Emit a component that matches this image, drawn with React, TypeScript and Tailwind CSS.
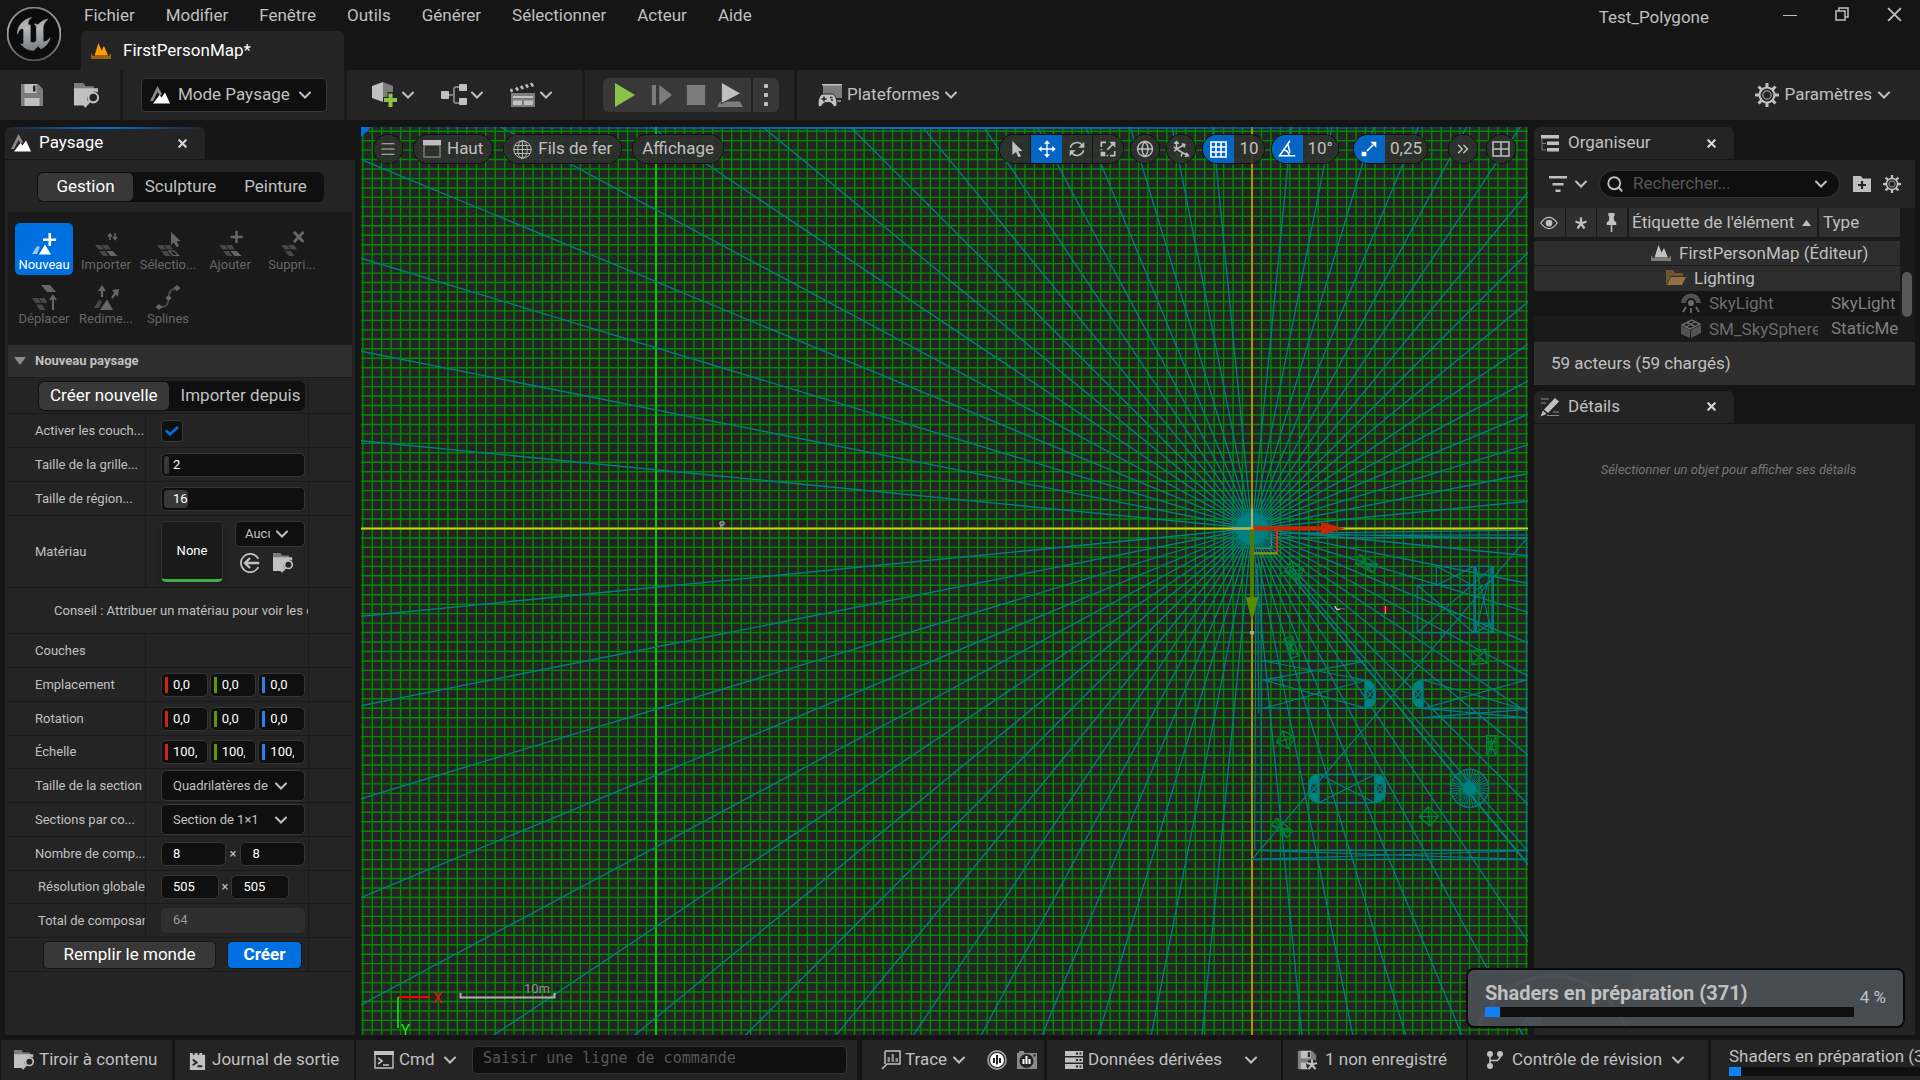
import type { ReactNode } from 'react';
import { ChevronsRight, Globe, Menu, Search, X } from 'lucide-react';
import { SiUnrealengine } from 'react-icons/si';

const menus = ['Fichier', 'Modifier', 'Fenêtre', 'Outils', 'Générer', 'Sélectionner', 'Acteur', 'Aide'];

/* ---------- icons ---------- */

function Icon({ size = 24, box = 24, className = '', children }: { size?: number; box?: number; className?: string; children: ReactNode }) {
  return (
    <svg width={size} height={size} viewBox={`0 0 ${box} ${box}`} fill="currentColor" className={`shrink-0 ${className}`} aria-hidden="true">
      {children}
    </svg>
  );
}

function Chevron({ className = '' }: { className?: string }) {
  return (
    <svg width="12" height="12" viewBox="0 0 12 12" fill="none" stroke="currentColor" strokeWidth="2" strokeLinecap="round" className={`pointer-events-none shrink-0 ${className}`} aria-hidden="true">
      <path d="M1 3.5l5 5 5-5" />
    </svg>
  );
}

function SaveIcon({ size = 24, star = false }: { size?: number; star?: boolean }) {
  return (
    <Icon size={size}>
      <path d="M1 1h17l5 5v17H1z" fill="#7c7c7c" />
      <path d="M4.500 1h12v9h-12z" fill="#c0c0c0" />
      <path d="M13 2.500h2.500v6H13z" fill="#242424" />
      <path d="M4.500 15h15v8h-15z" fill="#c0c0c0" />
      {star && <circle cx="18" cy="18" r="7" fill="#242424" />}
      {star && <path d="M18 17.500v-6.500M18 17.500l6-2M18 17.500l4 5.500M18 17.500l-4 5.500M18 17.500l-6-2" stroke="#c0c0c0" strokeWidth="2.600" />}
    </Icon>
  );
}

function FolderSearch({ size = 24 }: { size?: number }) {
  return (
    <Icon size={size}>
      <path d="M0 0h9l2 3h8v3H0z" fill="#7c7c7c" />
      <path d="M0 5h23v4a7 7 0 0 0-9.500 9l-3 3.500H0z" />
      <circle cx="18.500" cy="14" r="4.600" fill="none" stroke="currentColor" strokeWidth="2" />
      <path d="M15 17.500l-5 5.500" stroke="currentColor" strokeWidth="2.400" />
    </Icon>
  );
}

function LandscapeIcon({ size = 20 }: { size?: number }) {
  return (
    <Icon size={size} box={20}>
      <path d="M0 16L7.500 1l4.500 8-2 2-2.500-4L3 16z" fill="#8a8a8a" />
      <path d="M3 18.500L9.500 10l2 2.500L15 7.500l5 11z" fill="#fff" />
    </Icon>
  );
}

function LevelIcon({ tone, base }: { tone: string; base: string }) {
  return (
    <Icon size={20} box={20}>
      <path d="M0 15h20v3H0zM0 15V12l2 3zM20 15v-3l-2 3z" fill={base} />
      <path d="M3.500 14.500L7.500 2l3 7.500L13 5l4 9.500z" fill={tone} />
    </Icon>
  );
}

function GearIcon({ size = 24 }: { size?: number }) {
  return (
    <Icon size={size}>
      <g stroke="currentColor">
        <path d="M12 0v5M12 19v5M0 12h5M19 12h5M3.500 3.500l3.500 3.500M17 17l3.500 3.500M3.500 20.500L7 17M17 7l3.500-3.500" strokeWidth="3" />
        <circle cx="12" cy="12" r="7.500" fill="#242424" strokeWidth="2.200" />
        <circle cx="12" cy="12" r="4.200" fill="#242424" strokeWidth="1" />
      </g>
    </Icon>
  );
}

function TileBase() {
  return <path d="M1 13h6l3 4.500H4.500zM8 13h6l3 4.500h-6zM5 19h6l3.500 5H9z" opacity=".6" />;
}

const tools: { label: string; icon: ReactNode }[] = [
  {
    label: 'Nouveau',
    icon: (
      <>
        <path d="M0 22l5-8 3 1-3 7z" opacity=".6" />
        <path d="M7 22.500l6-10 6 10z" />
        <path d="M16.500 1h2.600v5.500h5v2.600h-5v5h-2.600v-5h-5.500V6.500h5.500z" />
      </>
    ),
  },
  {
    label: 'Importer',
    icon: (
      <>
        <TileBase />
        <path d="M12.500 19h6l5 5h-7z" />
        <path d="M16 8V3M14 4.500l2-2.500 2 2.500M21 1v6M19 5l2 2.500L23 5" fill="none" stroke="currentColor" strokeWidth="1.500" />
      </>
    ),
  },
  {
    label: 'Sélectio...',
    icon: (
      <>
        <TileBase />
        <path d="M13 19h5l4.500 4.500h-5.500z" fill="none" stroke="currentColor" strokeWidth="1.200" />
        <path d="M15 0l9.500 9-4 .5 2.500 4.500-2.500 1-2.500-4.500-3 2.500z" />
      </>
    ),
  },
  {
    label: 'Ajouter',
    icon: (
      <>
        <TileBase />
        <path d="M12.500 19h6l5 5h-7z" />
        <path d="M18.500-1v12M12.500 5h12" stroke="currentColor" strokeWidth="2.500" />
      </>
    ),
  },
  {
    label: 'Suppri...',
    icon: (
      <>
        <TileBase />
        <path d="M14 0l9.500 10M23.500 0L14 10" stroke="currentColor" strokeWidth="2.800" />
      </>
    ),
  },
  {
    label: 'Déplacer',
    icon: (
      <>
        <path d="M0 12h6l3 5H3.500zM7 12h6l2 5h-5zM4 18.500h6l3.500 5.500H8z" opacity=".6" />
        <path d="M9-1h9l6 7H15z" />
        <path d="M21 24V11M18 14l3-4 3 4" fill="none" stroke="currentColor" strokeWidth="2" />
      </>
    ),
  },
  {
    label: 'Redime...',
    icon: (
      <>
        <path d="M0 22l5-8 3 1-3 7z" opacity=".6" />
        <path d="M6 24l7-10.500L19 24z" />
        <path d="M8 11V2M18 12l5-7" stroke="currentColor" strokeWidth="2.200" />
        <path d="M4 5l4-6 4 6zM18 4l7-1-1 8z" />
      </>
    ),
  },
  {
    label: 'Splines',
    icon: (
      <>
        <path d="M3 21c8 0 9-2 9.500-9S15 3 22 2" fill="none" stroke="currentColor" strokeWidth="2" opacity=".6" />
        <path d="M3 18l3.500 3L3 24l-3.500-3zM12.500 9l3 3-3 3-3-3zM21-1l3.500 3L21 5l-3.500-3z" />
      </>
    ),
  },
];

/* ---------- small controls ---------- */

function PanelTab({ title, icon, active = false }: { title: string; icon: ReactNode; active?: boolean }) {
  return (
    <div className="relative flex h-8 w-[200px] items-center rounded-t-md bg-[#242424] pr-[15px] pl-1.5">
      {active && <span className="absolute inset-x-0 top-0 h-0.5 bg-linear-to-r from-transparent via-[#0070e0] to-transparent" />}
      {icon}
      <h2 className={active ? 'ml-2 grow text-[17px] text-white' : 'ml-2 grow text-[17px]'}>{title}</h2>
      <button aria-label={`Fermer ${title}`} className="p-px text-[#d8d8d8]">
        <X size={13} strokeWidth={4} />
      </button>
    </div>
  );
}

function Row({ label, inset = false, height = 'h-[34px]', children }: { label: string; inset?: boolean; height?: string; children?: ReactNode }) {
  return (
    <div className={`flex border-b border-[#1a1a1a] ${height}`}>
      <div className={`flex w-[138px] shrink-0 items-center overflow-hidden border-r border-[#1a1a1a] whitespace-nowrap ${inset ? 'pl-[30px]' : 'pl-[27px]'}`}>{label}</div>
      <div className="flex w-[163px] shrink-0 items-center border-r border-[#1a1a1a] pr-[3px] pl-[15px]">{children}</div>
    </div>
  );
}

function NumberBox({ label, value, fill, bar }: { label: string; value: string; fill?: string; bar?: string }) {
  return (
    <span className="relative flex h-6 min-w-0 flex-1 items-center overflow-hidden rounded-[5px] border border-[#363636] bg-[#0f0f0f]">
      {fill && <span className={`absolute inset-y-0.5 left-0.5 rounded-sm bg-[#383838] ${fill}`} />}
      {bar && <span className={`ml-[3px] h-4 w-[3px] shrink-0 ${bar}`} />}
      <input aria-label={label} defaultValue={value} className={`relative w-full min-w-0 bg-transparent text-white outline-none ${bar ? 'mr-2.5 pl-[5px]' : 'pl-[11px]'}`} />
    </span>
  );
}

function VectorRow({ label, value, height }: { label: string; value: string; height?: string }) {
  return (
    <Row label={label} height={height}>
      <div className="flex w-full gap-0.5">
        <NumberBox label={`${label} X`} value={value} bar="bg-[#c92706]" />
        <NumberBox label={`${label} Y`} value={value} bar="bg-[#5c9a00]" />
        <NumberBox label={`${label} Z`} value={value} bar="bg-[#2f7fee]" />
      </div>
    </Row>
  );
}

function SelectBox({ label, value, className }: { label: string; value: string; className: string }) {
  return (
    <span className={`flex items-center rounded-[5px] border border-[#363636] bg-[#0f0f0f] ${className}`}>
      <select aria-label={label} className="min-w-0 grow appearance-none overflow-hidden bg-transparent text-clip outline-none">
        <option>{value}</option>
      </select>
      <Chevron className="ml-1.5" />
    </span>
  );
}

/* ---------- header ---------- */

function Header() {
  return (
    <header className="flex h-[70px]">
      <svg width="0" height="0" className="absolute" aria-hidden="true">
        <linearGradient id="steel" x1="0" y1="0" x2="0" y2="1">
          <stop offset="0" stopColor="#8d8d8d" />
          <stop offset=".4" stopColor="#b5b8ba" />
          <stop offset="1" stopColor="#5d6163" />
        </linearGradient>
      </svg>
      <div className="w-[69px] shrink-0 pt-[7px] pl-[7px]">
        <div className="size-[54px] rounded-full bg-[#0c0c0c]">
          <SiUnrealengine size={54} fill="url(#steel)" stroke="url(#steel)" strokeWidth=".3" />
        </div>
      </div>
      <div className="ml-3 flex flex-col">
        <nav className="ml-[3px] flex h-[31px] items-center gap-[31px]">
          {menus.map((item) => (
            <button key={item}>{item}</button>
          ))}
        </nav>
        <div className="flex h-[39px] w-[263px] items-center rounded-t-md bg-[#242424] pl-2.5 text-white">
          <LevelIcon tone="#ff9c00" base="#9b6410" />
          <h1 className="ml-3">FirstPersonMap*</h1>
        </div>
      </div>
      <div className="ml-auto flex h-9 items-center">
        <span>Test_Polygone</span>
        <div className="mr-[18px] mb-2 ml-[74px] flex items-center gap-[38px]">
          <button aria-label="Réduire">
            <Icon size={14} box={14}>
              <path d="M0 8.500h14" stroke="currentColor" />
            </Icon>
          </button>
          <button aria-label="Restaurer">
            <Icon size={14} box={14}>
              <path d="M1 4h9v9H1zM4 4V1h9v9h-3" fill="none" stroke="currentColor" strokeWidth="1.500" />
            </Icon>
          </button>
          <button aria-label="Fermer">
            <Icon size={15} box={14}>
              <path d="M1 1l12 12M13 1L1 13" stroke="currentColor" strokeWidth="1.700" />
            </Icon>
          </button>
        </div>
      </div>
    </header>
  );
}

function Toolbar() {
  return (
    <div className="flex h-[50px] items-center bg-[#242424]">
      <div className="flex h-full w-[123px] items-center gap-[30px] border-r-3 border-[#1a1a1a] pl-5">
        <button aria-label="Enregistrer"><SaveIcon /></button>
        <button aria-label="Parcourir"><FolderSearch size={25} /></button>
      </div>
      <div className="flex h-full w-[224px] items-center border-r-3 border-[#1a1a1a] pl-[18px]">
        <span className="flex h-[34px] w-[186px] items-center rounded-[5px] border border-[#383838] bg-[#0f0f0f] pr-[15px] pl-2">
          <LandscapeIcon />
          <select aria-label="Mode" className="ml-2 min-w-0 grow appearance-none bg-transparent outline-none">
            <option>Mode Paysage</option>
          </select>
          <Chevron />
        </span>
      </div>
      <div className="flex h-full w-[238px] items-center gap-[27px] border-r-3 border-[#1a1a1a] pl-[25px]">
        <button aria-label="Ajouter au projet" className="flex items-center gap-1">
          <Icon size={26} box={26}>
            <path d="M0 4l11-4v20L0 16z" />
            <path d="M11 0l10 4v12l-10 4z" fill="#7c7c7c" />
            <path d="M15.500 10h6v5H26v6h-4.500v5h-6v-5H11v-6h4.500z" fill="#242424" />
            <path d="M16.500 11.500h4V16H25v4h-4.500v5h-4v-5H12v-4h4.500z" fill="#8bc34a" />
          </Icon>
          <Chevron />
        </button>
        <button aria-label="Blueprints" className="flex items-center gap-1">
          <Icon size={26} box={26}>
            <path d="M8 13h5V7q0-2 2-2h3M13 13v6q0 2 2 2h3" fill="none" stroke="#7c7c7c" strokeWidth="2" />
            <rect y="9" width="8" height="8" rx="1" />
            <rect x="18" y="2" width="8" height="7" rx="1" />
            <rect x="18" y="16" width="8" height="7" rx="1" />
          </Icon>
          <Chevron />
        </button>
        <button aria-label="Cinématiques" className="flex items-center gap-1">
          <Icon size={26} box={26}>
            <path d="M1 11h24v14H1z" fill="#7c7c7c" />
            <path d="M3 14h20v2H3zM3 18.500h9V23H3zM14 18.500h9V23h-9z" />
            <path d="M1 7l1 3M6 5.500l2 3M11 4l2 3M16 2.500l2 3M21 1l2 3.500" stroke="currentColor" strokeWidth="2.500" />
          </Icon>
          <Chevron />
        </button>
      </div>
      <div className="flex h-full w-[212px] items-center border-r-3 border-[#1a1a1a] pl-[18px]">
        <div className="flex h-[34px] items-center rounded-md bg-[#383838]">
          <button aria-label="Jouer" className="px-2.5"><Icon size={24}><path d="M2 0l20 12L2 24z" fill="#8bc34a" /></Icon></button>
          <button aria-label="Image suivante" className="px-1 text-[#7c7c7c]"><Icon size={22}><path d="M1 1h4.500v22H1zM9 1l14 11L9 23z" /></Icon></button>
          <button aria-label="Arrêter" className="pr-2.5 pl-2 text-[#7c7c7c]"><Icon size={22}><path d="M2 1h20v22H2z" /></Icon></button>
          <button aria-label="Éjecter" className="pr-2">
            <Icon size={26}>
              <path d="M3 18h18l3 5H0z" fill="#7c7c7c" />
              <path d="M4 0l18 10.500L4 20z" stroke="#383838" />
            </Icon>
          </button>
          <button aria-label="Options de jeu" className="flex h-full w-7 items-center justify-center border-l-2 border-[#242424]">
            <Icon size={24}><rect x="10" y="1" width="4" height="4" rx="1" /><rect x="10" y="10" width="4" height="4" rx="1" /><rect x="10" y="19" width="4" height="4" rx="1" /></Icon>
          </button>
        </div>
      </div>
      <button className="ml-[21px] flex items-center gap-[5px]">
        <Icon size={24}>
          <path d="M5 1h19v14H5zM17 17h6v2h-6z" fill="#7c7c7c" />
          <path d="M4 1h20v1.500H4z" />
          <path d="M5 11h9c3 0 5 5 5 10 0 3-3 4-5 0-1-2-8-2-9 0-2 4-5 3-5 0 0-5 2-10 5-10z" stroke="#242424" />
          <path d="M6 13.500v5M3.500 16h5M12 14.500h2.500M13 17h2" stroke="#242424" strokeWidth="1.500" />
        </Icon>
        <span>Plateformes</span>
        <Chevron />
      </button>
      <button className="mr-[30px] ml-auto flex items-center gap-1.5">
        <GearIcon />
        <span>Paramètres</span>
        <Chevron />
      </button>
    </div>
  );
}

/* ---------- landscape panel ---------- */

function LandscapePanel() {
  return (
    <aside className="flex w-[350px] shrink-0 flex-col">
      <PanelTab title="Paysage" active icon={<LandscapeIcon />} />
      <div className="mt-px flex grow flex-col bg-[#242424] px-[3px] pt-3">
        <div className="ml-[29px] grid w-[287px] grid-cols-3 rounded-md bg-[#0f0f0f] p-px text-[17px]">
          <button className="h-7 rounded-[5px] bg-[#383838] text-white">Gestion</button>
          <button className="h-7">Sculpture</button>
          <button className="h-7">Peinture</button>
        </div>
        <div className="mt-2.5 bg-[#1a1a1a] pt-[11px] pb-4 pl-[7px]">
          <div className="flex flex-wrap gap-x-1 gap-y-0.5">
            {tools.map((tool, i) => (
              <button
                key={tool.label}
                className={
                  i === 0
                    ? 'flex h-[52px] w-[58px] flex-col items-center rounded-[5px] bg-[#0070e0] pt-[9px] text-white'
                    : 'flex h-[52px] w-[58px] flex-col items-center rounded-[5px] pt-[9px] text-[#666]'
                }
              >
                <Icon size={24} className="overflow-visible">{tool.icon}</Icon>
                <span className="text-[13px] leading-[18px]">{tool.label}</span>
              </button>
            ))}
          </div>
        </div>
        <h3 className="flex h-8 shrink-0 items-center bg-[#2f2f2f] pl-1.5 text-[13px] font-bold">
          <svg width="12" height="8" viewBox="0 0 12 8" fill="#8a8a8a" aria-hidden="true"><path d="M0 0h12L6 8z" /></svg>
          <span className="ml-[9px]">Nouveau paysage</span>
        </h3>
        <div className="border-t border-[#1a1a1a] text-[13px]">
          <div className="flex h-9 border-b border-[#1a1a1a]">
            <div className="flex w-[301px] shrink-0 items-center border-r border-[#1a1a1a] pr-[3px] pl-[30px]">
              <div className="flex h-[30px] w-full overflow-hidden rounded-md bg-[#0f0f0f] p-px text-[17px] whitespace-nowrap">
                <button className="shrink-0 rounded-[5px] bg-[#383838] px-[11px] text-white">Créer nouvelle</button>
                <button className="pl-3">Importer depuis</button>
              </div>
            </div>
          </div>
          <Row label="Activer les couch...">
            <span className="relative flex size-[22px] items-center justify-center">
              <input type="checkbox" defaultChecked aria-label="Activer les couches" className="absolute inset-0 appearance-none rounded-sm border border-[#383838] bg-[#0f0f0f]" />
              <svg width="14" height="10" viewBox="0 0 14 10" fill="none" stroke="#0070e0" strokeWidth="2.800" className="pointer-events-none relative" aria-hidden="true"><path d="M1 4.500L5 8.200 13 1" /></svg>
            </span>
          </Row>
          <Row label="Taille de la grille..."><NumberBox label="Taille de la grille" value="2" fill="w-[5px]" /></Row>
          <Row label="Taille de région..."><NumberBox label="Taille de région" value="16" fill="w-6" /></Row>
          <Row label="Matériau" height="h-[72px]">
            <div className="flex h-[61px] w-[62px] shrink-0 items-center justify-center rounded-[5px] border border-b-3 border-[#2f2f2f] border-b-[#3fae49] bg-[#1a1a1a] text-white shadow-md">None</div>
            <div className="ml-3 flex h-[61px] flex-1 flex-col gap-1.5">
              <SelectBox label="Matériau" value="Aucun" className="h-[26px] w-[70px] shrink-0 pr-4 pl-[9px]" />
              <div className="flex items-start gap-[13px] pl-[5px]">
                <button aria-label="Utiliser la sélection" className="flex">
                  <Icon size={20}>
                    <path d="M22 7a11 11 0 1 0 0 10" fill="none" stroke="currentColor" strokeWidth="2.200" />
                    <path d="M23 12H6M12 6l-6 6 6 6" fill="none" stroke="currentColor" strokeWidth="2.800" />
                  </Icon>
                </button>
                <button aria-label="Parcourir le contenu" className="flex"><FolderSearch size={20} /></button>
              </div>
            </div>
          </Row>
          <div className="flex h-[46px] border-b border-[#1a1a1a]">
            <p className="w-[301px] overflow-hidden border-r border-[#1a1a1a] pl-[46px] leading-[45px] whitespace-nowrap">Conseil : Attribuer un matériau pour voir les couches</p>
          </div>
          <Row label="Couches" />
          <VectorRow label="Emplacement" value="0,0" />
          <VectorRow label="Rotation" value="0,0" />
          <VectorRow label="Échelle" value="100,0" height="h-[33px]" />
          <Row label="Taille de la section"><SelectBox label="Taille de la section" value="Quadrilatères de 63×63" className="h-[31px] w-full pr-[17px] pl-[11px]" /></Row>
          <Row label="Sections par co..."><SelectBox label="Sections par composant" value="Section de 1×1" className="h-[31px] w-full pr-[17px] pl-[11px]" /></Row>
          <Row label="Nombre de comp...">
            <div className="flex w-full items-center gap-1">
              <NumberBox label="Composants X" value="8" />
              <span>×</span>
              <NumberBox label="Composants Y" value="8" />
            </div>
          </Row>
          <Row label="Résolution globale" inset height="h-[33px]">
            <div className="flex w-32 items-center gap-[3px]">
              <NumberBox label="Résolution X" value="505" />
              <span>×</span>
              <NumberBox label="Résolution Y" value="505" />
            </div>
          </Row>
          <Row label="Total de composants" inset>
            <output className="h-[25px] w-full rounded-[5px] bg-[#2f2f2f] pl-3 leading-6 text-[#9a9a9a]">64</output>
          </Row>
          <div className="flex h-[34px] border-b border-[#1a1a1a]">
            <div className="flex w-[301px] items-center justify-end gap-[11px] border-r border-[#1a1a1a] pr-1.5 text-[17px] text-white">
              <button className="h-7 w-[173px] rounded-[5px] border border-[#151515] bg-[#383838]">Remplir le monde</button>
              <button className="h-7 w-[75px] rounded-[5px] border border-[#151515] bg-[#0070e0] font-bold">Créer</button>
            </div>
          </div>
        </div>
      </div>
    </aside>
  );
}

/* ---------- viewport ---------- */

const CX = 1252;
const CY = 528.5;
const STEP = 9.46;
const columns = Array.from({ length: 124 }, (_, i) => CX + (i - 94) * STEP);
const rows = Array.from({ length: 97 }, (_, i) => CY + (i - 43) * STEP);
const rays = Array.from({ length: 64 }, (_, i) => i * 5.625);
const crates = [
  { x: 837, y: 531, w: 46, h: 42, r: -6 },
  { x: 257, y: 779, w: 40, h: 40, r: 28 },
  { x: 687, y: 1009, w: 42, h: 40, r: 42 },
  { x: 283, y: 272, w: 44, h: 40, r: 35 },
  { x: 499, y: 251, w: 60, h: 30, r: 28 },
  { x: 274, y: 502, w: 62, h: 26, r: 72 },
  { x: 874, y: 797, w: 60, h: 28, r: 90 },
  { x: 246, y: 1044, w: 60, h: 26, r: 40 },
];

function polar(cx: number, cy: number, radius: number, deg: number) {
  const a = (deg * Math.PI) / 180;
  return `${(cx + radius * Math.cos(a)).toFixed(2)} ${(cy + radius * Math.sin(a)).toFixed(2)}`;
}

function Cap({ x, y, flip = false }: { x: number; y: number; flip?: boolean }) {
  return (
    <g transform={`translate(${x} ${y})${flip ? ' scale(-1 1)' : ''}`}>
      <path d="M0 0q31 2 31 34v17q0 32-31 34z" fill="#008080" />
      <path d="M4 29h22v28H4z" fill="#1c3a2a" />
      <path d="M4 29l22 28M26 29L4 57" />
    </g>
  );
}

function Wireframe() {
  return (
    <svg viewBox="361 127 1167 908" preserveAspectRatio="xMidYMid slice" className="absolute inset-0 size-full" aria-hidden="true">
      <path d={columns.map((x) => `M${x.toFixed(2)} 100V1060`).join('') + rows.map((y) => `M300 ${y.toFixed(2)}H1600`).join('')} stroke="#008a00" strokeWidth="1.400" />
      <path d="M656 100v960" stroke="#00cc00" strokeWidth="2" />
      <path d={rays.map((a) => `M${CX} ${CY}L${polar(CX, CY, 1200, a)}`).join('')} stroke="#008080" strokeWidth="1.300" />
      <circle cx={CX} cy={CY} r="16" fill="#008080" />
      <path d={`M300 ${CY}H1600`} stroke="#d2d200" strokeWidth="2" />
      <path d={`M${CX} 100V1060`} stroke="#a89600" strokeWidth="2" />
      <path d={`M${CX - 20} ${CY}H${CX}V${CY - 20}`} fill="none" stroke="#b8b060" strokeWidth="2" />
      <g transform="translate(1200 480) scale(.33333)" fill="none" stroke="#008080" strokeWidth="3.600">
        <path d="M184 280V1112M173 250L176 700M168 250L164 1110M184 1111H984M156 1138H984M184 1112L984 1138M156 1138L984 1112M980 173V1138M235 173H984M260 160L980 176M240 160L984 150M330 165H984" />
        <path d="M156 1138L980 176M270 270L980 1110M255 265L984 1152" />
        <path d="M652 316H822V458H652zM709 259H880V458H822V259M709 259V316M826 259V458M876 259V458M652 458L880 259M652 316L822 458M709 316L822 259M709 259L822 318M826 259L876 458M876 259L826 458M826 330L880 300M826 430H876L826 458M826 430L876 458" />
        <path d="M184 543H495M184 600H500M184 685H500M190 543L497 600M190 600L490 545M190 600L500 685M190 685L500 600" />
        <path d="M669 600H980M669 685H980M669 713H980M669 600L980 690M669 685L980 600M669 685L980 713M669 713L980 688" />
        <path d="M355 883H525M355 968H525M357 883L525 968M357 968L525 883" />
        <Cap x={495} y={600} />
        <Cap x={669} y={600} flip />
        <Cap x={525} y={883} />
        <Cap x={357} y={883} flip />
        <circle cx="809" cy="925" r="57" />
        <circle cx="809" cy="925" r="18" fill="#008080" />
        <path d={Array.from({ length: 40 }, (_, i) => `M809 925L${polar(809, 925, 57, i * 9)}`).join('')} strokeWidth="2.600" />
        <g stroke="#00803c">
          {crates.map((c) => (
            <g key={`${c.x}-${c.y}`} transform={`translate(${c.x} ${c.y}) rotate(${c.r})`}>
              <path d={`M${-c.w / 2} ${-c.h / 2}h${c.w}v${c.h}h${-c.w}zl${c.w} ${c.h}M${c.w / 2} ${-c.h / 2}l${-c.w} ${c.h}`} strokeWidth="4" />
              {c.w > 50 && <path d="M-12-13v26M12-13v26M-24 0h48M-12-13L12 13" />}
            </g>
          ))}
        </g>
        <path d="M214 160V205H165" stroke="#58707a" />
        <path d="M231 152V220" stroke="#d83000" strokeWidth="6" />
        <path d="M160 220H233" stroke="#7a9c10" strokeWidth="7" />
        <path d="M160 145H365" stroke="#c42a00" strokeWidth="13" />
        <path d="M363 126L435 145 363 165z" fill="#c42a00" stroke="none" />
        <path d="M156 148V354" stroke="#4f7c00" strokeWidth="12" />
        <path d="M137 352H175L156 424z" fill="#5c8c00" stroke="none" />
        <path d="M150 453h12v10h-12z" fill="#aaa" stroke="none" />
        <path d="M404 378l6 10h8l2-3" stroke="#ddd" />
        <path d="M416 386h18" stroke="#567" />
        <circle cx="556" cy="387" r="10" fill="#900" stroke="none" />
        <path d="M556 378v24" stroke="#b0a090" />
      </g>
      <path d="M720 522h4v3h-4zM721 525v3h3" fill="none" stroke="#bbb" />
      <path d="M398 997h32" stroke="#f00" strokeWidth="2" />
      <path d="M398 997v31" stroke="#0f0" strokeWidth="1.500" />
      <path d="M460.500 993v4.500h94V993" fill="none" stroke="#b0b0b0" strokeWidth="2" />
      <text x="433" y="1003" fontSize="15" fill="#e01010">X</text>
      <text x="401" y="1035" fontSize="15" fill="#10f010">Y</text>
      <text x="524" y="993" fontSize="13" fill="#909090">10m</text>
    </svg>
  );
}

const pill = 'flex h-7 items-center overflow-hidden rounded-full bg-[#303030]/90 ring-1 ring-[#101010]';
const round = 'flex size-7 items-center justify-center rounded-full bg-[#303030]/90 ring-1 ring-[#101010]';
const cell = 'flex h-full w-[31px] items-center justify-center border-r border-[#151515]';
const cellOn = 'flex h-full w-[31px] items-center justify-center bg-[#0565c5] text-white';

function Viewport() {
  return (
    <main className="relative min-w-0 flex-1 overflow-hidden bg-[#242424]">
      <Wireframe />
      <span className="absolute inset-x-0 top-0 h-0.5 bg-linear-to-r from-[#0070e0]/10 via-[#0070e0] to-[#0070e0]/10" />
      <svg width="10" height="10" className="absolute top-0 left-0" aria-hidden="true"><path d="M0 0h10L0 10z" fill="#0070e0" /></svg>
      <div className="absolute inset-x-0 top-2 flex items-center justify-between px-[13px]">
        <div className="flex items-center gap-3">
          <button aria-label="Menu de la vue" className={round}><Menu size={18} strokeWidth={1.6} /></button>
          <button className={`${pill} gap-1.5 px-[9px]`}>
            <Icon size={18} box={18}>
              <path d="M1 5h16v12H1z" fill="none" stroke="#7c7c7c" strokeWidth="1.500" />
              <path d="M0 0h18v5H0z" />
            </Icon>
            <span>Haut</span>
          </button>
          <button className={`${pill} gap-1.5 px-[9px]`}>
            <Icon size={19}>
              <g fill="none" stroke="currentColor" strokeWidth="1.200">
                <circle cx="12" cy="12" r="11" />
                <ellipse cx="12" cy="12" rx="6" ry="11" />
                <path d="M1 12h22M2.500 7h19M2.500 17h19M12 1v22" />
              </g>
            </Icon>
            <span>Fils de fer</span>
          </button>
          <button className={`${pill} px-[9px]`}>Affichage</button>
        </div>
        <div className="flex items-center gap-2">
          <div className={pill}>
            <button aria-label="Sélectionner" className={cell}><Icon size={16} className="ml-1"><path d="M5 0l15 15-6 .5 4 7.500-4 1.500-3.500-8L5 21z" /></Icon></button>
            <button aria-label="Déplacer" className={cellOn}>
              <Icon size={16} className="overflow-visible">
                <path d="M12 3v18M3 12h18" stroke="currentColor" strokeWidth="2" />
                <path d="M12-1l4.500 5h-9zM12 25l4.500-5h-9zM-1 12l5-4.500v9zM25 12l-5-4.500v9z" />
              </Icon>
            </button>
            <button aria-label="Pivoter" className={cell}>
              <Icon size={16}>
                <path d="M2 10A10.500 10.500 0 0 1 20 6M22 14a10.500 10.500 0 0 1-18 4" fill="none" stroke="currentColor" strokeWidth="2.400" />
                <path d="M23 1v9h-9zM1 23v-9h9z" />
              </Icon>
            </button>
            <button aria-label="Redimensionner" className="flex h-full w-[30px] items-center justify-center">
              <Icon size={16}>
                <path d="M2 9V2h7M22 15v7h-7M2 12v2M10 22h2" fill="none" stroke="currentColor" strokeWidth="2.400" />
                <path d="M11 13l8-8" stroke="currentColor" strokeWidth="2.600" />
                <path d="M14 1h9v9zM1 16h7v7H1z" />
              </Icon>
            </button>
          </div>
          <button aria-label="Espace monde" className={round}><Globe size={18} strokeWidth={1.8} /></button>
          <button aria-label="Alignement de surface" className={round}>
            <Icon size={18}>
              <g fill="none" stroke="currentColor" strokeWidth="2">
                <path d="M6 2v10l8 5 8 4M6 12l11-6M3 5l3-3 3 3M13 5l4 1-1 4M2 9l4 3-3 3M14 17l-2 5M19 17l3 4-5 1" />
              </g>
            </Icon>
          </button>
          <div className={pill}>
            <button aria-label="Grille" className={cellOn}>
              <Icon size={17} box={18}><path d="M1 1h16v16H1zM1 6.300h16M1 11.700h16M6.300 1v16M11.700 1v16" fill="none" stroke="currentColor" strokeWidth="1.700" /></Icon>
            </button>
            <button className="px-[5px]">10</button>
          </div>
          <div className={pill}>
            <button aria-label="Angle" className={cellOn}>
              <Icon size={18}><path d="M16 1L2 21h21M7 13q7 1 8 8M13 5l3 12" fill="none" stroke="currentColor" strokeWidth="2" /></Icon>
            </button>
            <button className="px-[5px]">10°</button>
          </div>
          <div className={`${pill} ml-2`}>
            <button aria-label="Échelle" className={cellOn}>
              <Icon size={16}><path d="M9 15l9-9" stroke="currentColor" strokeWidth="2.600" /><path d="M14 1h9v9zM1 16h7v7H1z" /></Icon>
            </button>
            <button className="px-[5px]">0,25</button>
          </div>
          <button aria-label="Plus d'options" className={`${round} ml-3.5`}><ChevronsRight size={18} /></button>
          <button aria-label="Disposition" className={`${round} ml-0.5`}>
            <Icon size={18} box={18}><path d="M1 2h16v14H1zM1 9h16M9 2v14" fill="none" stroke="currentColor" strokeWidth="1.500" /></Icon>
          </button>
        </div>
      </div>
    </main>
  );
}

/* ---------- right column ---------- */

function Outliner() {
  return (
    <section>
      <PanelTab
        title="Organiseur"
        icon={
          <Icon size={20} box={20}>
            <path d="M1 2h18v3.500H1zM7 8.500h12V12H7zM7 15h12v3.500H7z" />
            <path d="M2 6v11h4M2 10.500h4" fill="none" stroke="#7c7c7c" />
          </Icon>
        }
      />
      <div className="mt-px bg-[#242424]">
        <div className="flex h-12 items-center pr-3.5 pl-[15px]">
          <button aria-label="Filtres" className="flex items-center gap-2">
            <Icon size={18} box={18}><path d="M0 1h18v2.500H0zM3.500 8h11v2.500h-11zM6.500 14.500h5V17h-5z" /></Icon>
            <Chevron />
          </button>
          <label className="mr-[13px] ml-3 flex h-7 min-w-0 grow items-center rounded-full border border-[#333] bg-[#0f0f0f] pr-3 pl-1.5">
            <Search size={18} strokeWidth={2.4} />
            <input placeholder="Rechercher..." aria-label="Rechercher" className="ml-[9px] w-0 min-w-0 grow bg-transparent outline-none placeholder:text-[#575757]" />
            <Chevron />
          </label>
          <button aria-label="Nouveau dossier" className="mr-3">
            <Icon size={18} box={18}>
              <path d="M0 1h8l1.500 2.500H18V17H0z" />
              <path d="M9 6v8M5 10h8" stroke="#242424" strokeWidth="2.200" />
            </Icon>
          </button>
          <button aria-label="Réglages"><GearIcon size={18} /></button>
        </div>
        <div className="relative bg-[#1a1a1a]">
          <table className="w-full table-fixed border-collapse text-left whitespace-nowrap">
            <colgroup>
              <col className="w-[31px]" />
              <col className="w-[31px]" />
              <col className="w-8" />
              <col />
              <col className="w-[82px]" />
              <col className="w-[15px]" />
            </colgroup>
            <thead>
              <tr className="h-[31px] bg-[#2f2f2f]">
                <th aria-label="Visibilité" className="border-r border-[#1a1a1a] p-0">
                  <Icon size={18} className="mx-auto"><path d="M1 12q11-15 22 0-11 15-22 0z" fill="none" stroke="currentColor" strokeWidth="1.600" /><circle cx="12" cy="12" r="4.500" /></Icon>
                </th>
                <th aria-label="Non enregistré" className="border-r border-[#1a1a1a] p-0">
                  <Icon size={12} className="mx-auto"><path d="M12 13V1M12 13l11-4M12 13l7 10M12 13L5 23M12 13L1 9" stroke="currentColor" strokeWidth="4.500" /></Icon>
                </th>
                <th aria-label="Épinglé" className="border-r-2 border-[#1a1a1a] p-0">
                  <Icon size={19} className="mx-auto"><path d="M8 0h8v3l-1 1v5l3 3v3H6v-3l3-3V4L8 3zM11 15h2v9h-2z" /></Icon>
                </th>
                <th className="border-r-2 border-[#1a1a1a] p-0 pl-[3px] font-normal">
                  <span className="flex items-center gap-2">
                    Étiquette de l'élément
                    <svg width="9" height="6" viewBox="0 0 9 6" fill="currentColor" aria-hidden="true"><path d="M0 6l4.500-6L9 6z" /></svg>
                  </span>
                </th>
                <th className="p-0 pl-1 font-normal">Type</th>
                <th aria-hidden="true" className="bg-[#1a1a1a] p-0" />
              </tr>
            </thead>
            <tbody>
              <tr className="h-[26px] border-t-4 border-b border-[#1a1a1a] bg-[#2d2d2d]">
                <td colSpan={5} className="p-0 pl-[117px]">
                  <span className="flex items-center gap-2 leading-6"><LevelIcon tone="#c0c0c0" base="#7c7c7c" />FirstPersonMap (Éditeur)</span>
                </td>
                <td className="bg-[#1a1a1a] p-0" />
              </tr>
              <tr className="h-[25px] bg-[#2d2d2d]">
                <td colSpan={5} className="p-0 pl-[132px]">
                  <span className="flex items-center gap-2 leading-6">
                    <Icon size={20} box={20}><path d="M0 17V2h7l2 3h8v3H5z" fill="#6e5530" /><path d="M5 9h15l-4 8H1z" fill="#957142" /></Icon>
                    Lighting
                  </span>
                </td>
                <td className="bg-[#1a1a1a] p-0" />
              </tr>
              <tr className="h-[25px] bg-[#151515] text-[#6c6c6c]">
                <td colSpan={4} className="p-0 pl-[147px]">
                  <span className="flex items-center gap-2 leading-6">
                    <Icon size={20} box={20}><path d="M0 10a10 9.500 0 0 1 20 0h-5a5 5 0 0 0-10 0z" opacity=".7" /><circle cx="10" cy="10" r="3" /><path d="M10 15v5M5 14l-3 5M15 14l3 5" stroke="currentColor" strokeWidth="1.800" /></Icon>
                    SkyLight
                  </span>
                </td>
                <td className="p-0 pl-[13px] text-[#808080]">SkyLight</td>
                <td className="bg-[#1a1a1a] p-0" />
              </tr>
              <tr className="h-[25px] text-[#6c6c6c]">
                <td colSpan={4} className="p-0 pl-[147px]">
                  <span className="flex items-center gap-2 leading-6">
                    <Icon size={20} box={20}><path d="M0 7l9 4v8l-9-4zM10 11l10-5v8l-10 5z" opacity=".7" /><path d="M1 6l10-5 8 4-10 5zM6 3.500l8 4M5 8l9-5" fill="none" stroke="currentColor" strokeWidth="1.400" /></Icon>
                    <span className="overflow-hidden">SM_SkySphere</span>
                  </span>
                </td>
                <td className="overflow-hidden p-0 pl-[13px] text-[#808080]">StaticMe</td>
                <td className="p-0" />
              </tr>
            </tbody>
          </table>
          <span className="absolute right-[3px] bottom-[25px] h-[45px] w-2.5 rounded-full bg-[#575757]" />
        </div>
        <p className="h-[43px] bg-[#2f2f2f] pl-[17px] leading-[43px]">59 acteurs (59 chargés)</p>
      </div>
    </section>
  );
}

function Details() {
  return (
    <section className="mt-1.5 flex grow flex-col">
      <PanelTab
        title="Détails"
        icon={
          <Icon size={20} box={20}>
            <path d="M1 2h8M1 6h5M13 15h6M7 18.500h12" stroke="#8a8a8a" />
            <path d="M15 1l4 3.500L8 16l-4-3.500zM3 13.500L6.500 17 .5 19.500z" />
          </Icon>
        }
      />
      <div className="mt-px grow bg-[#242424] pt-9 pl-2 text-center text-[13px] text-[#757575] italic">Sélectionner un objet pour afficher ses détails</div>
    </section>
  );
}

/* ---------- status bar ---------- */

function StatusBar() {
  return (
    <footer className="mt-[5px] flex h-10 overflow-hidden whitespace-nowrap *:flex *:shrink-0 *:items-center *:bg-[#242424]">
      <button className="mr-[3px] ml-px w-[171px] gap-[5px] pl-[13px]"><FolderSearch size={20} />Tiroir à contenu</button>
      <button className="mr-0.5 w-[179px] gap-1.5 pl-3.5">
        <Icon size={19} box={20} className="-mx-px">
          <path d="M2 2h3v2h2V2h3v2h2V2h3v2h3v16H2z" />
          <path d="M5 9l4 3-4 3M10 16h5" fill="none" stroke="#242424" strokeWidth="2" />
        </Icon>
        Journal de sortie
      </button>
      <div className="mr-[5px] w-[501px] pl-[18px]">
        <Icon size={20} box={20}>
          <path d="M1 2h18v16H1z" fill="none" stroke="currentColor" strokeWidth="1.400" />
          <path d="M0 1h20v4H0z" />
          <path d="M4 8l4 3-4 3M9 15h6" fill="none" stroke="currentColor" strokeWidth="1.700" />
        </Icon>
        <select aria-label="Type de commande" className="ml-[5px] w-[45px] appearance-none bg-transparent outline-none"><option>Cmd</option></select>
        <Chevron />
        <input aria-label="Ligne de commande" placeholder="Saisir une ligne de commande" className="ml-4 h-7 w-[375px] rounded-[5px] border border-[#333] bg-[#0f0f0f] px-2.5 pb-1 font-['DejaVu_Sans_Mono',monospace] text-[15px] outline-none placeholder:text-[#575757]" />
      </div>
      <div className="mr-[3px] w-[182px] pl-[19px]">
        <button className="flex items-center gap-1">
          <Icon size={20} box={20}>
            <path d="M4 1h15v13H6l-5 5M4 1v13" fill="none" stroke="currentColor" strokeWidth="1.500" />
            <path d="M6.500 7h2.500v5H6.500zM10.500 4h2.500v8h-2.500zM14.500 8h2.500v4h-2.500z" fill="#8a8a8a" />
          </Icon>
          Trace
          <Chevron className="ml-0.5" />
        </button>
        <button aria-label="Démarrer la trace" className="ml-[22px]">
          <Icon size={20} box={20}>
            <circle cx="10" cy="10" r="9" fill="none" stroke="#9a9a9a" strokeWidth="1.800" />
            <circle cx="10" cy="10" r="7" fill="#fff" />
            <path d="M6 8h2v5H6zM9 5h2v9.500H9zM12 8h2v5h-2z" fill="#242424" />
          </Icon>
        </button>
        <button aria-label="Instantané" className="ml-2.5">
          <Icon size={20} box={20}>
            <path d="M0 3h2V1h5v2h13v16H0z" fill="#8a8a8a" />
            <circle cx="9.500" cy="11" r="7" fill="#242424" />
            <path d="M5.500 9h2v5h-2zM8.500 6h2v8h-2zM11.500 9h2v5h-2z" fill="#fff" />
            <path d="M16.500 4.500h2v2h-2z" fill="#242424" />
          </Icon>
        </button>
      </div>
      <button className="mr-0.5 w-[234px] gap-[5px] pl-[18px]">
        <Icon size={18} box={18}>
          <path d="M0 0h18v5H0zM0 6.500h18v5H0zM0 13h18v5H0z" />
          <path d="M11 1.500h2v2h-2zM14.500 1.500h2v2h-2zM11 8h2v2h-2zM14.500 8h2v2h-2zM11 14.500h2v2h-2zM14.500 14.500h2v2h-2z" fill="#242424" />
        </Icon>
        Données dérivées
        <Chevron className="ml-[18px]" />
      </button>
      <button className="mr-0.5 w-[183px] gap-2 pl-3.5"><SaveIcon size={20} star />1 non enregistré</button>
      <button className="mr-[3px] w-[240px] gap-2 pl-[18px]">
        <Icon size={18} box={18}>
          <circle cx="4" cy="3" r="3" /><circle cx="14" cy="3" r="3" /><circle cx="4" cy="15" r="3" />
          <path d="M4 3v12M14 3v3.500l-2.500 3H4" fill="none" stroke="currentColor" strokeWidth="1.500" />
        </Icon>
        Contrôle de révision
        <Chevron className="ml-0.5" />
      </button>
      <div className="min-w-[209px] grow flex-col pt-[5px] pl-[18px]">
        <span className="w-[192px] overflow-hidden leading-[22px]">Shaders en préparation (371)</span>
        <span className="h-[9px] w-[192px] bg-[#0f0f0f]"><span className="block h-full w-3 bg-[#1080f8]" /></span>
      </div>
    </footer>
  );
}

function Toast() {
  return (
    <div role="status" className="absolute right-[15px] bottom-[52px] flex h-[60px] w-[439px] items-center overflow-hidden rounded-lg border-2 border-[#0a0a0a] bg-[#474c50] px-[17px]">
      <svg width="160" height="56" viewBox="0 0 160 56" className="absolute top-0 left-1" fill="none" stroke="#505560" strokeWidth="4" opacity=".6" aria-hidden="true">
        <circle cx="80" cy="84" r="78" />
        <path d="M48 56q10-18 22-20v20z" fill="#505560" stroke="none" />
      </svg>
      <div className="relative grow">
        <p className="text-xl leading-7 font-bold">Shaders en préparation (371)</p>
        <div className="h-2.5 bg-[#0f0f0f]"><div className="h-full bg-[#1080f8]" style={{ width: '4%' }} /></div>
      </div>
      <span className="ml-1.5">4 %</span>
    </div>
  );
}

export default function App() {
  return (
    <div className="relative flex h-screen flex-col overflow-hidden bg-[#151515] font-[Roboto,sans-serif] text-[17px] text-[#c0c0c0]">
      <Header />
      <Toolbar />
      <div className="mt-[7px] flex min-h-0 grow gap-1.5 px-[5px]">
        <LandscapePanel />
        <Viewport />
        <div className="flex w-[381px] shrink-0 flex-col">
          <Outliner />
          <Details />
        </div>
      </div>
      <StatusBar />
      <Toast />
    </div>
  );
}
